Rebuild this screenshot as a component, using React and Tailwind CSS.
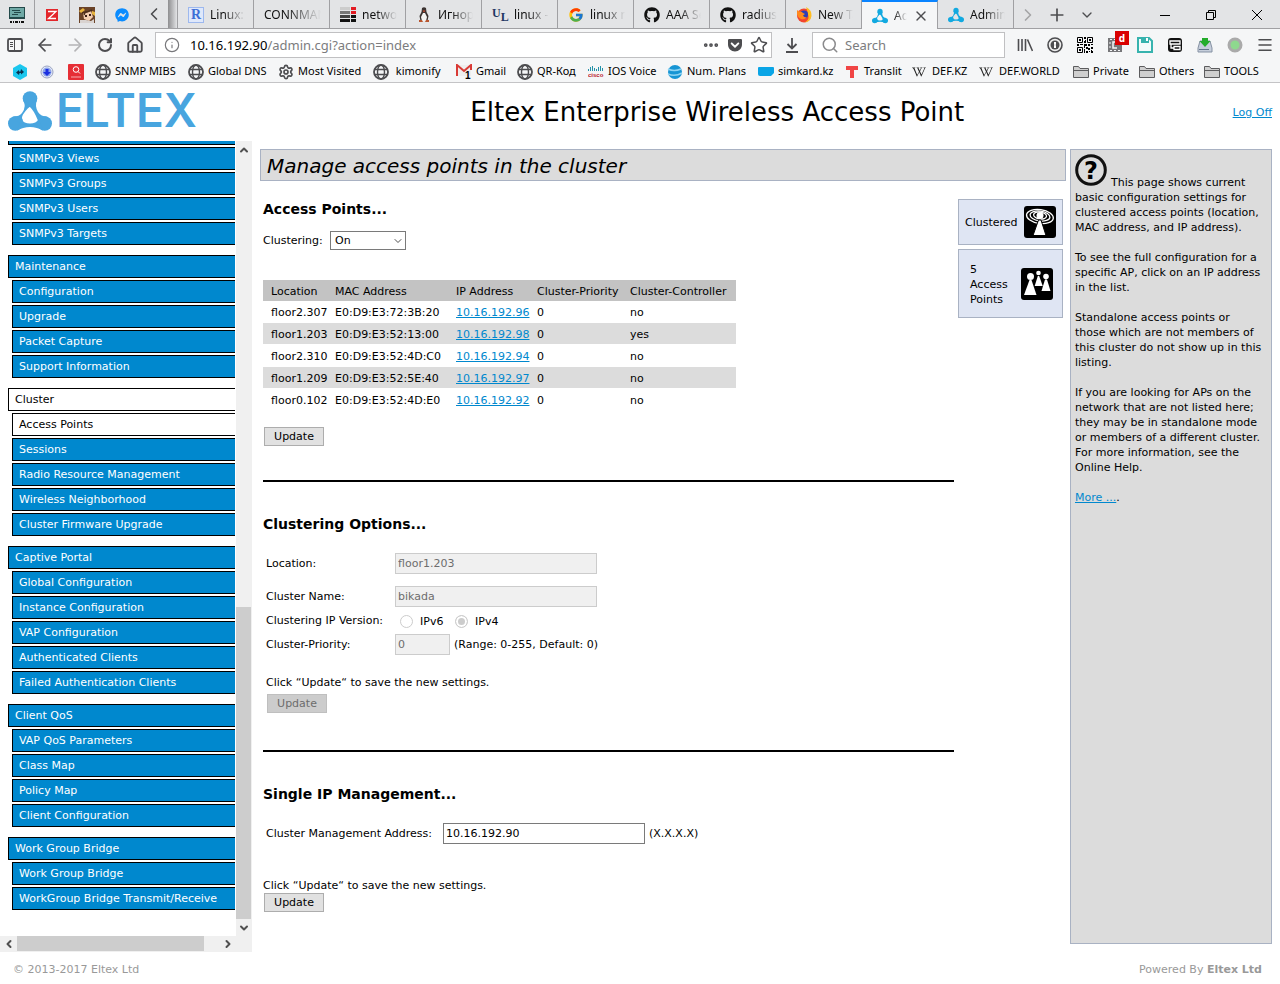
import { useState } from 'react'
import clsx from 'clsx'
import {
  ArrowLeft, ArrowRight, ChevronDown, ChevronLeft, ChevronRight, ChevronUp, CircleAlert,
  Ellipsis, Folder, Globe, House, Menu, Minus, PanelLeft, Plus, QrCode, RotateCw, Search, Settings, Star, X
} from 'lucide-react'
import { FaFacebookMessenger, FaFirefox, FaGetPocket, FaGithub, FaLinux, FaWikipediaW } from 'react-icons/fa'
import { FcGoogle } from 'react-icons/fc'

const EltexMark = ({ color = '#48a5df', ...props }) => (
  <svg viewBox="0 0 44 40" fill={color} {...props}>
    <circle cx="22" cy="7.500" r="7.300" />
    <circle cx="7.300" cy="32.500" r="7.300" />
    <circle cx="36.700" cy="32.500" r="7.300" />
    <path d="M15 9 Q19 15 14 22 Q11.500 25.500 5 25.500 L13.500 36 Q14 31 15 29 Q13 27 15 23.500 Q20 16 24 14.500Z" />
    <path d="M29 9 Q26.500 15 30 21 Q33 25.500 39 25.500 L30.500 34 Q30 28 27.500 24 Q24 17 20 14.500Z" />
    <path d="M9 39.500 Q15 36 22 36 T35 39.500 L31 28 Q28 32.500 22 32.500 T13 28Z" />
  </svg>
)

const MonitorIcon = () => (
  <svg viewBox="0 0 16 16" className="size-4">
    <path fill="#23494a" d="M0 0h16v12H0z" />
    <path fill="#6fa9a6" d="M1 1h14v9H1z" />
    <path stroke="#23494a" d="M3 3.500h8M5 5.500h7M3 7.500h6" />
    <path fill="#111" d="M1 14h2v2H1zM4 14h1v2H4zM6 14h3v2H6zM10 14h1v2h-1zM12 14h3v2h-3z" />
  </svg>
)

const ZabbixIcon = () => (
  <svg viewBox="0 0 16 16" className="size-4">
    <path fill="#e3262b" d="M2 2h12v12H2z" />
    <path fill="none" stroke="#fff" strokeWidth="1.300" d="M4 4.500h8L4.500 11.500H12" />
  </svg>
)

const PortraitIcon = () => (
  <svg viewBox="0 0 16 16" className="size-4">
    <path fill="#6b4328" d="M0 0h16v16H0z" />
    <path fill="#e8b53f" d="M0 4l4-3 2 2-4 3zM13 4l3 1v4l-3-2z" />
    <path fill="#f3cdb0" d="M4 6l8-2 2 6-4 4-5-2z" />
    <path fill="#3a1f16" d="M6 8h2v2H6zM10 7h2v2h-2z" />
    <path fill="#d9d3d0" d="M1 13l6 0 5 1 3-2v4H1z" />
    <path stroke="#50301c" strokeWidth="1.500" d="M3 6l5-1 5-2M7 4l-2 4" />
  </svg>
)

const NetworkIcon = () => (
  <svg viewBox="0 0 16 16" className="size-4">
    <path fill="#ccc" d="M0 0h10v3H0z" />
    <path fill="#e31b23" d="M11 0h5v3h-5zM11 4h5v3h-5z" />
    <path fill="#777" d="M0 4h10v3H0z" />
    <path fill="#444" d="M0 8h10v3H0z" />
    <path fill="#111" d="M0 12h10v3H0zM11 8h5v3h-5zM11 12h5v3h-5z" />
  </svg>
)

const PenguinIcon = () => (
  <svg viewBox="0 0 16 16" className="size-4">
    <path fill="#3b3331" d="M6 1q2-1.500 4 0l.5 4 2 4-1 5h-7l-1-5 2-4z" />
    <path fill="#f4f4f2" d="M7 6h2l2 4-1 4H6l-1-4z" />
    <path fill="#c94f35" d="M6.500 3.500h3L8 5.500z" />
    <path fill="#b8552f" d="M3 13l3 0 1 2H3zM10 13h3v2h-4z" />
  </svg>
)

const FirefoxIcon = () => (
  <svg viewBox="0 0 16 16" className="size-4">
    <circle cx="8" cy="8.500" r="7" fill="#f2452f" />
    <path fill="#ffbd20" d="M10 0q6 3 5.500 9-1 6-7.500 6.500 5-2 4.500-6T10 0z" />
    <circle cx="8" cy="7.500" r="4" fill="#2d3fb5" />
    <path fill="#ff8a1c" d="M1 3l2 1.500q3-.5 4 1.500l2 1-2 1.500q1 2.500 4 1.500-2 3-6 2-4-2-4-6z" />
  </svg>
)

const UlIcon = () => (
  <span className="flex size-4 shrink-0 font-['Liberation_Serif',serif] text-[12px] leading-none font-bold text-[#1f3763]">
    <span>U</span>
    <span className="self-end">L</span>
  </span>
)

const RIcon = () => (
  <span className="flex size-4 items-center justify-center border border-[#9db8ee] bg-[#dfe8fb] font-['Liberation_Serif',serif] text-sm leading-none font-bold text-[#3d6fd6]">
    R
  </span>
)

const HexIcon = () => (
  <svg viewBox="0 0 16 16" className="size-4">
    <path fill="#1cc7ee" d="M8 0l7 4v8l-7 4-7-4V4z" />
    <path fill="#0a3350" d="M4 8.500l3-2.500v1.500h1.500L9 5l3 3-3 2.500V9H7.500L7 11z" />
  </svg>
)

const ArrowBadge = () => (
  <svg viewBox="0 0 16 16" className="size-4">
    <circle cx="8" cy="8" r="6" fill="#e9edf8" stroke="#98a3c2" />
    <circle cx="8" cy="8" r="4.500" fill="#8ba3ea" />
    <path fill="#1a2fe0" d="M6.500 5h3v3H12l-4 4-4-4h2.500z" />
  </svg>
)

const AliIcon = () => (
  <svg viewBox="0 0 16 16" className="size-4">
    <rect width="16" height="16" rx="1" fill="#e62e35" />
    <g fill="none" stroke="#fff">
      <circle cx="8" cy="5.500" r="2.800" />
      <path d="M10 7.500l2 2" />
      <path strokeOpacity=".6" d="M3 13h10" />
    </g>
  </svg>
)

const GlobeIcon = () => (
  <svg viewBox="0 0 16 16" className="size-4 shrink-0" fill="none" stroke="#4d4d50" strokeWidth="1.400">
    <circle cx="8" cy="8" r="7" strokeWidth="1.800" />
    <ellipse cx="8" cy="8" rx="3.500" ry="7" />
    <path d="M1.500 5.500h13M1.500 10.500h13" />
  </svg>
)

const GmailIcon = () => (
  <svg viewBox="0 0 16 16" className="size-4">
    <path fill="#eee" d="M1 1h14v11H1z" />
    <path fill="none" stroke="#d93a35" strokeWidth="2" d="M1 12V1l7 6 7-6v5" />
    <text x="9" y="15" fontSize="10" fontWeight="bold" fontFamily="Liberation Sans, sans-serif">1</text>
  </svg>
)

const CiscoIcon = () => (
  <svg viewBox="0 0 16 16" className="size-4">
    <path stroke="#2391a8" d="M.5 5v2M2.500 3v4M4.500 2v5M6.500 4v3M8.500 5v2M10.500 3v4M12.500 2v5M14.500 4v3" />
    <text x="0" y="13" fontSize="6" fontWeight="bold" fill="#b9202c" fontFamily="Liberation Sans, sans-serif">cisco</text>
  </svg>
)

const PlansIcon = () => (
  <svg viewBox="0 0 16 16" className="size-4">
    <circle cx="8" cy="8" r="7" fill="#1795d4" />
    <path fill="none" stroke="#8fd4f3" strokeWidth="1.500" d="M1 5q6 3 13 0M1 10q7 3 14-1" />
  </svg>
)

const SimIcon = () => (
  <svg viewBox="0 0 16 16" className="size-4">
    <path fill="#0aa5e6" d="M1 3h14q1 0 1 1v5l-3 3H2q-2 0-2-2V4q0-1 1-1z" />
  </svg>
)

const TranslitIcon = () => (
  <svg viewBox="0 0 16 16" className="size-4">
    <path fill="#f04545" d="M2 2h12v4h-4v8H6V6H2z" />
  </svg>
)

const WikiIcon = () => <FaWikipediaW className="size-3.5 shrink-0 text-[#222]" />

const FolderIcon = () => (
  <svg viewBox="0 0 16 16" className="size-4 shrink-0">
    <path fill="#cfcfcf" stroke="#5c5c5e" d="M.5 13.500v-11h5l1.500 2h8.500v9z" />
    <path stroke="#5c5c5e" d="M.5 6.500h15" />
  </svg>
)

const LibraryIcon = () => (
  <svg viewBox="0 0 16 16" className="size-4" stroke="#4d4d50" strokeWidth="1.600">
    <path d="M1.500 2v12M5 2v12M8.500 2v12M10.500 2.500l5 11.500" />
  </svg>
)

const KeyIcon = () => (
  <svg viewBox="0 0 16 16" className="size-4">
    <circle cx="8" cy="8" r="7" fill="#eee" stroke="#4d4d50" strokeWidth="1.600" />
    <circle cx="8" cy="8" r="4.500" fill="#4d4d50" />
    <path fill="#fff" d="M7 5h2v2.500l-.5.500.5.500V11H7V8.500l.5-.5-.5-.5z" />
  </svg>
)

const QrIcon = () => (
  <svg viewBox="0 0 16 16" className="size-4">
    <g fill="none" stroke="#000">
      <path d="M.5.500h5v5h-5zM10.500.500h5v5h-5zM.5 10.500h5v5h-5z" />
    </g>
    <path d="M2 2h2v2H2zM12 2h2v2h-2zM2 12h2v2H2zM7 0h2v2H7zM8 3h1v3H7V4h1zM0 7h2v2H0zM3 7h3v1H3zM7 7h3v2H8v2H7zM11 7h2v2h-2zM14 7h2v1h-2zM9 10h2v1h2v2h-2v-1H9zM14 10h2v2h-2zM7 12h1v4H7zM9 14h2v2H9zM12 14h1v1h-1zM14 13h1v1h1v2h-2z" />
  </svg>
)

const CaptureIcon = () => (
  <span className="relative">
    <svg viewBox="0 0 16 16" className="size-4">
      <path fill="#77777a" d="M1 1h14v14H1z" />
      <path fill="none" stroke="#f5f6f7" strokeWidth="1.500" d="M9 5H6v6h4" />
      <path stroke="#f5f6f7" strokeDasharray="2 2" d="M3 2.500h10M3 13.500h10M3 5v6" />
    </svg>
    <span className="absolute -top-1.5 left-2 flex size-3.5 items-center justify-center bg-[#d90000] text-[10px] leading-none font-bold text-white">d</span>
  </span>
)

const FloppyIcon = () => (
  <svg viewBox="0 0 16 16" className="size-4">
    <path fill="#f4fbfb" stroke="#37b3ae" strokeWidth="2" d="M1 1h11l3 3v11H1z" />
    <path fill="#37b3ae" d="M4 1h8v5H4z" />
    <path fill="#fff" d="M9 1h2v3H9z" />
  </svg>
)

const ProxyIcon = () => (
  <svg viewBox="0 0 16 16" className="size-4">
    <rect x="1" y="1" width="14" height="14" rx="3" fill="#111" />
    <path fill="none" stroke="#fff" strokeWidth="1.300" d="M3 4h10v3H3zM7 9.500h6v3H7zM4 7v4h3" />
  </svg>
)

const DriveIcon = () => (
  <svg viewBox="0 0 16 16" className="size-4">
    <path fill="#c6cedb" stroke="#8591a3" d="M3 4h10l2 7v4H1v-4z" />
    <path stroke="#65758c" d="M2 12.500h10" />
    <path fill="#24ac2c" d="M5 1h6v3h2.500L8 10 2.500 4H5z" />
  </svg>
)

const StatusDot = () => (
  <svg viewBox="0 0 16 16" className="size-4">
    <circle cx="8" cy="8" r="6" fill="#8ed88e" stroke="#aaa" strokeWidth="3" />
  </svg>
)

const DownloadIcon = () => (
  <svg viewBox="0 0 16 16" className="size-4" fill="none" stroke="#4d4d50" strokeWidth="1.800">
    <path d="M8 1v10M3.500 7L8 11.500 12.500 7M2 15h12" />
  </svg>
)

const HelpIcon = () => (
  <svg viewBox="0 0 32 32" className="mr-1 inline size-8 align-baseline">
    <circle cx="16" cy="16" r="14.300" fill="none" stroke="#111" strokeWidth="3" />
    <text x="16" y="25" textAnchor="middle" fontSize="24" fontWeight="bold" fontFamily="DejaVu Sans, sans-serif">?</text>
  </svg>
)

const AntennaIcon = () => (
  <svg viewBox="0 0 32 32" className="size-8 shrink-0">
    <rect width="32" height="32" rx="3" />
    <g fill="none" stroke="#fff" strokeWidth="1.300" transform="rotate(8 16 10)">
      <ellipse cx="16" cy="10.500" rx="13.500" ry="7" />
      <ellipse cx="16" cy="10" rx="10" ry="5" />
      <ellipse cx="16" cy="9.500" rx="6.500" ry="3.500" />
    </g>
    <circle cx="16" cy="9.500" r="3.500" fill="#fff" />
    <path d="M14.500 14h2.500l5 15.500H9z" fill="#fff" stroke="#000" />
  </svg>
)

const GroupIcon = () => (
  <svg viewBox="0 0 32 32" className="size-8 shrink-0">
    <rect width="32" height="32" rx="3" />
    <g fill="#fff">
      <circle cx="9.500" cy="8.500" r="3.500" />
      <path d="M8.500 12h2l5 15H3z" />
      <circle cx="17.500" cy="5" r="2.300" />
      <path d="M16.800 8h1.400l3.500 10h-8z" />
      <circle cx="25" cy="8.500" r="2.800" />
      <path d="M24 11.500h2l3.500 11.500h-9z" />
    </g>
  </svg>
)

const pinned = [
  { name: 'Monitor', icon: <MonitorIcon /> },
  { name: 'Zabbix', icon: <ZabbixIcon /> },
  { name: 'Portrait', icon: <PortraitIcon /> },
  { name: 'Messenger', icon: <FaFacebookMessenger className="size-3.5 text-[#0b8cff]" /> }
]

const tabs = [
  { title: 'Linux:', icon: <RIcon /> },
  { title: 'CONNMAN' },
  { title: 'network', icon: <NetworkIcon /> },
  { title: 'Игнор', icon: <PenguinIcon /> },
  { title: 'linux - U', icon: <UlIcon /> },
  { title: 'linux net', icon: <FcGoogle className="size-4" /> },
  { title: 'AAA Se', icon: <FaGithub className="size-4 text-[#111]" /> },
  { title: 'radius_', icon: <FaGithub className="size-4 text-[#111]" /> },
  { title: 'New Tab', icon: <FirefoxIcon /> },
  { title: 'Admin', icon: <EltexMark className="size-4" color="#12a9e0" />, active: true },
  { title: 'Admin', icon: <EltexMark className="size-4" color="#12a9e0" /> }
]

const bookmarks = [
  { label: 'SNMP MIBS', icon: <GlobeIcon />, width: 'w-[93px]' },
  { label: 'Global DNS', icon: <GlobeIcon />, width: 'w-[90px]' },
  { label: 'Most Visited', icon: <Settings className="size-4 shrink-0 text-[#4d4d50]" strokeWidth={2.5} />, width: 'w-[95px]' },
  { label: ' kimonify', icon: <GlobeIcon />, width: 'w-[83px]' },
  { label: 'Gmail', icon: <GmailIcon />, width: 'w-[61px]' },
  { label: 'QR-Код', icon: <GlobeIcon />, width: 'w-[71px]' },
  { label: 'IOS Voice', icon: <CiscoIcon />, width: 'w-[79px]' },
  { label: 'Num. Plans', icon: <PlansIcon />, width: 'w-[91px]' },
  { label: 'simkard.kz', icon: <SimIcon />, width: 'w-[86px]' },
  { label: 'Translit', icon: <TranslitIcon />, width: 'w-[68px]' },
  { label: 'DEF.KZ', icon: <WikiIcon />, width: 'w-[67px]' },
  { label: 'DEF.WORLD', icon: <WikiIcon />, width: 'w-[94px]' },
  { label: 'Private', icon: <FolderIcon />, width: 'w-[66px]' },
  { label: 'Others', icon: <FolderIcon />, width: 'w-[65px]' },
  { label: 'TOOLS', icon: <FolderIcon />, width: 'w-[65px]' }
]

const menu = [
  { items: ['SNMPv3 Views', 'SNMPv3 Groups', 'SNMPv3 Users', 'SNMPv3 Targets'] },
  { title: 'Maintenance', items: ['Configuration', 'Upgrade', 'Packet Capture', 'Support Information'] },
  {
    title: 'Cluster',
    items: ['Access Points', 'Sessions', 'Radio Resource Management', 'Wireless Neighborhood', 'Cluster Firmware Upgrade']
  },
  {
    title: 'Captive Portal',
    items: ['Global Configuration', 'Instance Configuration', 'VAP Configuration', 'Authenticated Clients', 'Failed Authentication Clients']
  },
  { title: 'Client QoS', items: ['VAP QoS Parameters', 'Class Map', 'Policy Map', 'Client Configuration'] },
  { title: 'Work Group Bridge', items: ['Work Group Bridge', 'WorkGroup Bridge Transmit/Receive'] }
]

const accessPoints = [
  { location: 'floor2.307', mac: 'E0:D9:E3:72:3B:20', ip: '10.16.192.96', controller: 'no' },
  { location: 'floor1.203', mac: 'E0:D9:E3:52:13:00', ip: '10.16.192.98', controller: 'yes' },
  { location: 'floor2.310', mac: 'E0:D9:E3:52:4D:C0', ip: '10.16.192.94', controller: 'no' },
  { location: 'floor1.209', mac: 'E0:D9:E3:52:5E:40', ip: '10.16.192.97', controller: 'no' },
  { location: 'floor0.102', mac: 'E0:D9:E3:52:4D:E0', ip: '10.16.192.92', controller: 'no' }
]

const ToolButton = ({ label, children, className = 'w-[30px]' }) => (
  <button type="button" aria-label={label} className={clsx('flex h-7 shrink-0 items-center justify-center text-[#4d4d50]', className)}>
    {children}
  </button>
)

const TabBar = () => (
  <div className="flex h-[29px] bg-[#e3e4e6] text-[12px] text-[#111]">
    {pinned.map((tab) => (
      <button
        key={tab.name}
        type="button"
        aria-label={tab.name}
        className="flex w-[35px] shrink-0 items-center justify-center border-r border-b border-[#a0a0a3] pt-0.5"
      >
        {tab.icon}
      </button>
    ))}
    <ToolButton label="Scroll tabs left" className="h-full w-7 border-b border-[#a0a0a3]">
      <ChevronLeft className="size-5" />
    </ToolButton>
    <div className="w-[10px] shrink-0 border-r border-b border-[#a0a0a3] bg-linear-to-r from-[#8e8e90] to-[#e3e4e6]" />
    {tabs.map((tab, index) => (
      <button
        key={index}
        type="button"
        className={clsx(
          'flex w-[76px] shrink-0 items-center gap-1.5 overflow-hidden border-r border-[#a0a0a3] pl-2.5',
          tab.active ? 'border-t-2 border-t-[#0a84ff] bg-[#f5f6f7]' : 'border-b pt-0.5'
        )}
      >
        {tab.icon && <span className="shrink-0">{tab.icon}</span>}
        <span
          className={clsx(
            'flex-1 overflow-hidden text-left whitespace-nowrap',
            tab.active ? 'mask-r-from-0% mask-r-to-100%' : 'mr-2 mask-r-from-40% mask-r-to-100%'
          )}
        >
          {tab.title}
        </span>
        {tab.active && <X className="mr-2 size-4 shrink-0 text-[#4d4d50]" />}
      </button>
    ))}
    <div className="flex flex-1 items-center border-b border-[#a0a0a3] pt-px">
      <ToolButton label="Scroll tabs right" className="w-7">
        <ChevronRight className="size-5 text-[#a5a5a7]" />
      </ToolButton>
      <ToolButton label="New tab">
        <Plus className="size-5" />
      </ToolButton>
      <ToolButton label="All tabs">
        <ChevronDown className="size-4" />
      </ToolButton>
      <div className="ml-auto flex">
        <ToolButton label="Minimize" className="w-[46px]">
          <svg viewBox="0 0 10 10" className="size-2.5" stroke="#000">
            <path d="M0 5.500h10" />
          </svg>
        </ToolButton>
        <ToolButton label="Restore" className="w-[46px]">
          <svg viewBox="0 0 10 10" className="size-2.5" fill="none" stroke="#000">
            <path d="M.5 2.500h7v7h-7zM2.500 2.500v-2h7v7h-2" />
          </svg>
        </ToolButton>
        <ToolButton label="Close" className="w-[46px]">
          <svg viewBox="0 0 10 10" className="size-2.5" stroke="#000">
            <path d="M0 0l10 10M10 0L0 10" />
          </svg>
        </ToolButton>
      </div>
    </div>
  </div>
)

const Toolbar = () => (
  <div className="flex h-8 items-center bg-[#f5f6f7]">
    <ToolButton label="Sidebar">
      <svg viewBox="0 0 16 16" className="size-4" fill="none" stroke="#4d4d50">
        <rect x="1" y="2" width="14" height="12" rx="1.500" strokeWidth="1.800" />
        <path d="M7.500 2v12M3 5.500h3M3 7.500h3M3 9.500h3" />
      </svg>
    </ToolButton>
    <ToolButton label="Back"><ArrowLeft className="size-5" /></ToolButton>
    <ToolButton label="Forward"><ArrowRight className="size-5 text-[#b4b4b6]" /></ToolButton>
    <ToolButton label="Reload"><RotateCw className="size-4" strokeWidth={3} /></ToolButton>
    <ToolButton label="Home"><House className="size-[18px]" strokeWidth={2.5} /></ToolButton>
    <div className="ml-[5px] flex h-[26px] flex-1 items-center border border-[#c0c0c2] bg-white pl-2">
      <CircleAlert className="size-4 shrink-0 rotate-180 text-[#77777a]" strokeWidth={1.75} />
      <div className="flex-1 pt-0.5 pl-2.5 text-[13px] text-[#7c7c7e]">
        <span className="text-black">10.16.192.90</span>/admin.cgi?action=index
      </div>
      <ToolButton label="Page actions" className="w-6"><Ellipsis className="size-[18px]" strokeWidth={3} /></ToolButton>
      <ToolButton label="Save to Pocket" className="w-6"><FaGetPocket className="size-4" /></ToolButton>
      <ToolButton label="Bookmark this page" className="w-6"><Star className="size-[18px]" /></ToolButton>
    </div>
    <ToolButton label="Downloads" className="w-10"><DownloadIcon /></ToolButton>
    <div className="mr-[5px] flex h-[26px] w-[193px] shrink-0 items-center gap-1.5 border border-[#c0c0c2] bg-white pl-2">
      <Search className="size-[18px] shrink-0 text-[#8a8a8c]" />
      <input aria-label="Search" placeholder="Search" className="w-full min-w-0 pt-0.5 text-[13px] outline-none placeholder:text-[#7c7c7e]" />
    </div>
    <ToolButton label="Library"><LibraryIcon /></ToolButton>
    <ToolButton label="Passwords"><KeyIcon /></ToolButton>
    <ToolButton label="QR code"><QrIcon /></ToolButton>
    <ToolButton label="Capture"><CaptureIcon /></ToolButton>
    <ToolButton label="Save page"><FloppyIcon /></ToolButton>
    <ToolButton label="Proxy"><ProxyIcon /></ToolButton>
    <ToolButton label="Download helper"><DriveIcon /></ToolButton>
    <ToolButton label="Status"><StatusDot /></ToolButton>
    <ToolButton label="Menu"><Menu className="size-[18px]" /></ToolButton>
  </div>
)

const BookmarkBar = () => (
  <div className="flex h-[22px] items-center overflow-hidden border-b border-[#c4c4c6] bg-[#f5f6f7] pl-3 text-[11px] text-black">
    <a href="#hex" aria-label="Hex" className="w-[27px] shrink-0"><HexIcon /></a>
    <a href="#arrow" aria-label="Arrow" className="w-[29px] shrink-0"><ArrowBadge /></a>
    <a href="#ali" aria-label="AliExpress" className="w-[27px] shrink-0"><AliIcon /></a>
    {bookmarks.map((bookmark) => (
      <a key={bookmark.label} href="#bookmark" className={clsx('flex shrink-0 items-center whitespace-pre', bookmark.width)}>
        <span className="flex w-5 shrink-0">{bookmark.icon}</span>
        {bookmark.label}
      </a>
    ))}
  </div>
)

const MenuLink = ({ label, active, sub }) => (
  <a
    href="#menu"
    className={clsx(
      'block h-[23px] border border-r-0 border-black pl-1.5 leading-[22px] whitespace-nowrap',
      active ? 'bg-white text-black' : 'bg-[#0088ce] text-white',
      sub && 'ml-1'
    )}
  >
    {label}
  </a>
)

const Sidebar = () => (
  <div className="flex w-[252px] shrink-0 flex-col">
    <div className="flex flex-1">
      <nav className="flex flex-1 flex-col gap-2.5 overflow-hidden pl-2">
        {menu.map((group, index) => (
          <div key={index} className="flex flex-col gap-0.5">
            {group.title ? (
              <MenuLink label={group.title} active={group.title === 'Cluster'} />
            ) : (
              <div className="h-1 border-b border-l border-black bg-[#0088ce]" />
            )}
            {group.items.map((item) => (
              <MenuLink key={item} label={item} active={item === 'Access Points'} sub />
            ))}
          </div>
        ))}
      </nav>
      <div className="ml-px flex w-4 flex-col bg-[#f0f0f0]">
        <div className="flex h-[17px] items-center justify-center"><ChevronUp className="size-3 text-[#505050]" strokeWidth={4} /></div>
        <div className="flex-[448]" />
        <div className="mr-px flex-[312] bg-[#cdcdcd]" />
        <div className="flex h-[17px] items-center justify-center"><ChevronDown className="size-3 text-[#505050]" strokeWidth={4} /></div>
      </div>
    </div>
    <div className="flex h-4 bg-[#f0f0f0] pr-4">
      <div className="flex w-[17px] items-center justify-center"><ChevronLeft className="size-3 text-[#505050]" strokeWidth={4} /></div>
      <div className="mb-px flex-[187] bg-[#cdcdcd]" />
      <div className="flex-[15]" />
      <div className="flex w-[17px] items-center justify-center"><ChevronRight className="size-3 text-[#505050]" strokeWidth={4} /></div>
    </div>
  </div>
)

const UpdateButton = ({ disabled = false, className }) => (
  <button
    type="button"
    disabled={disabled}
    className={clsx(
      'block h-[19px] w-[60px] border text-center leading-[18px]',
      disabled ? 'border-[#bfbfbf] bg-[#cccccc] text-[#6d6d6d]' : 'border-[#adadad] bg-[#e1e1e1] text-black',
      className
    )}
  >
    Update
  </button>
)

const TextField = ({ className, ...props }) => (
  <input
    type="text"
    className={clsx(
      'h-[21px] border border-[#7a7a7a] bg-white px-0.5 disabled:border-[#cccccc] disabled:bg-[#f0f0f0] disabled:text-[#6d6d6d]',
      className
    )}
    {...props}
  />
)

const IpVersion = ({ label, checked = false }) => (
  <label className="flex w-[55px] items-center gap-[7px]">
    <input
      type="radio"
      name="ip-version"
      disabled
      defaultChecked={checked}
      className="size-[13px] appearance-none rounded-full border border-[#cccccc] bg-white checked:bg-[#cccccc] checked:shadow-[inset_0_0_0_2px_white]"
    />
    {label}
  </label>
)

const AccessPointTable = () => (
  <table className="mt-[30px] w-[473px] table-fixed border-separate border-spacing-0 text-left whitespace-nowrap">
    <thead>
      <tr className="h-[21px] bg-[#c3c3c3]">
        <th className="w-[69px] pt-px pl-2 font-normal">Location</th>
        <th className="w-[121px] pt-px pl-[3px] font-normal">MAC Address</th>
        <th className="w-[81px] pt-px pl-[3px] font-normal">IP Address</th>
        <th className="w-[93px] pt-px pl-[3px] font-normal">Cluster-Priority</th>
        <th className="w-[109px] pt-px pl-[3px] font-normal">Cluster-Controller</th>
      </tr>
    </thead>
    <tbody>
      {accessPoints.map((ap) => (
        <tr key={ap.mac} className="h-[22px] even:bg-[#dcdcdc]">
          <td className="border-b border-white pt-px pl-2">{ap.location}</td>
          <td className="border-b border-white pt-px pl-[3px]">{ap.mac}</td>
          <td className="border-b border-white pt-px pl-[3px]">
            <a href="#ap" className="text-[#0088ce] underline">{ap.ip}</a>
          </td>
          <td className="border-b border-white pt-px pl-[3px]">0</td>
          <td className="border-b border-white pt-px pl-[3px]">{ap.controller}</td>
        </tr>
      ))}
    </tbody>
  </table>
)

const ClusterForms = () => {
  const [clustering, setClustering] = useState('On')
  const [address, setAddress] = useState('10.16.192.90')

  return (
    <div className="min-w-0 flex-1 pt-[18px]">
      <section>
        <h2 className="text-sm leading-5 font-bold">Access Points...</h2>
        <div className="mt-3 flex items-center">
          <label htmlFor="clustering" className="w-[67px]">Clustering:</label>
          <div className="relative">
            <select
              id="clustering"
              value={clustering}
              onChange={(e) => setClustering(e.target.value)}
              className="block h-[19px] w-[76px] appearance-none border border-[#7a7a7a] bg-white pl-1 leading-none"
            >
              <option>On</option>
              <option>Off</option>
            </select>
            <ChevronDown className="pointer-events-none absolute top-1 right-0.5 size-3 text-[#505050]" />
          </div>
        </div>
        <AccessPointTable />
        <UpdateButton className="mt-4 ml-px" />
      </section>

      <section className="mt-[34px] border-t-2 border-black pt-8">
        <h2 className="text-sm leading-5 font-bold">Clustering Options...</h2>
        <div className="mt-[19px] ml-[3px]">
          <div className="grid grid-cols-[129px_1fr] items-center">
            <label htmlFor="location">Location:</label>
            <TextField id="location" disabled defaultValue="floor1.203" className="w-[202px]" />
            <label htmlFor="cluster-name" className="mt-3">Cluster Name:</label>
            <TextField id="cluster-name" disabled defaultValue="bikada" className="mt-3 w-[202px]" />
            <span className="whitespace-nowrap">Clustering IP Version:</span>
            <div className="flex h-[27px] items-center pt-0.5 pl-[5px]">
              <IpVersion label="IPv6" />
              <IpVersion label="IPv4" checked />
            </div>
            <label htmlFor="priority">Cluster-Priority:</label>
            <div className="flex items-center gap-1">
              <TextField id="priority" disabled defaultValue="0" className="w-[55px]" />
              (Range: 0-255, Default: 0)
            </div>
          </div>
          <p className="mt-5">Click “Update“ to save the new settings.</p>
          <UpdateButton disabled className="mt-1 ml-px" />
        </div>
      </section>

      <section className="mt-[37px] border-t-2 border-black pt-8">
        <h2 className="text-sm leading-5 font-bold">Single IP Management...</h2>
        <div className="mt-[19px] ml-[3px] flex items-center">
          <label htmlFor="address" className="w-[177px]">Cluster Management Address:</label>
          <TextField id="address" value={address} onChange={(e) => setAddress(e.target.value)} className="mr-1 w-[202px]" />
          (X.X.X.X)
        </div>
        <p className="mt-[34px]">Click “Update“ to save the new settings.</p>
        <UpdateButton className="ml-px" />
      </section>
    </div>
  )
}

const StatusBoxes = () => (
  <div className="flex w-[105px] shrink-0 flex-col gap-1 pt-[18px]">
    <div className="flex h-[46px] items-center justify-between border border-[#a9b2c3] bg-[#dfe5f3] px-1.5">
      Clustered
      <AntennaIcon />
    </div>
    <div className="flex h-[69px] items-center justify-between border border-[#a9b2c3] bg-[#dfe5f3] pr-[9px] pl-[11px]">
      <span className="w-10 pt-px">5 Access Points</span>
      <GroupIcon />
    </div>
  </div>
)

const HelpPanel = () => (
  <aside className="flex w-[202px] shrink-0 flex-col gap-[15px] border border-[#a9b2c3] bg-[#dcdcdc] px-1 pt-1">
    <p>
      <HelpIcon />
      This page shows current basic configuration settings for clustered access points (location, MAC address, and IP address).
    </p>
    <p>To see the full configuration for a specific AP, click on an IP address in the list.</p>
    <p>
      Standalone access points or
      <br />
      those which are not members of this cluster do not show up in this listing.
    </p>
    <p>
      If you are looking for APs on the network that are not listed here; they may be in standalone mode or members of a
      different cluster. For more information, see the Online Help.
    </p>
    <p><a href="#more" className="text-[#0088ce] underline">More ...</a>.</p>
  </aside>
)

const App = () => (
  <div className="flex min-h-screen flex-col bg-white">
    <div className="font-['Noto_Sans',sans-serif]">
      <TabBar />
      <Toolbar />
      <BookmarkBar />
    </div>

    <div className="flex flex-1 flex-col font-['DejaVu_Sans',sans-serif] text-[11px] leading-[15px] text-black">
      <header className="grid h-[58px] grid-cols-[202px_1fr_auto] items-center pr-2">
        <svg viewBox="0 0 194 42" className="ml-2 h-[42px] w-[194px]" role="img" aria-label="ELTEX">
          <EltexMark x="0" y="0" width="44" height="40" />
          <text x="48" y="36" fontSize="46" fontWeight="600" fill="#48a5df" fontFamily="Inter, sans-serif">ELTEX</text>
        </svg>
        <h1 className="text-center text-[26px] leading-8">Eltex Enterprise Wireless Access Point</h1>
        <a href="#logoff" className="text-[#0088ce] underline">Log Off</a>
      </header>

      <div className="flex flex-1">
        <Sidebar />
        <main className="flex flex-1 gap-1 p-2">
          <div className="flex min-w-0 flex-1 flex-col">
            <div className="h-8 border border-[#a9b2c3] bg-[#dcdcdc] pl-1.5 text-[20px] leading-8 italic">
              Manage access points in the cluster
            </div>
            <div className="flex flex-1 gap-1 px-[3px]">
              <ClusterForms />
              <StatusBoxes />
            </div>
          </div>
          <HelpPanel />
        </main>
      </div>

      <footer className="flex h-8 items-center justify-between pt-0.5 pr-[18px] pl-[13px] text-[#999]">
        <span>© 2013-2017 Eltex Ltd</span>
        <span>Powered By <b>Eltex Ltd</b></span>
      </footer>
    </div>
  </div>
)

export default App
